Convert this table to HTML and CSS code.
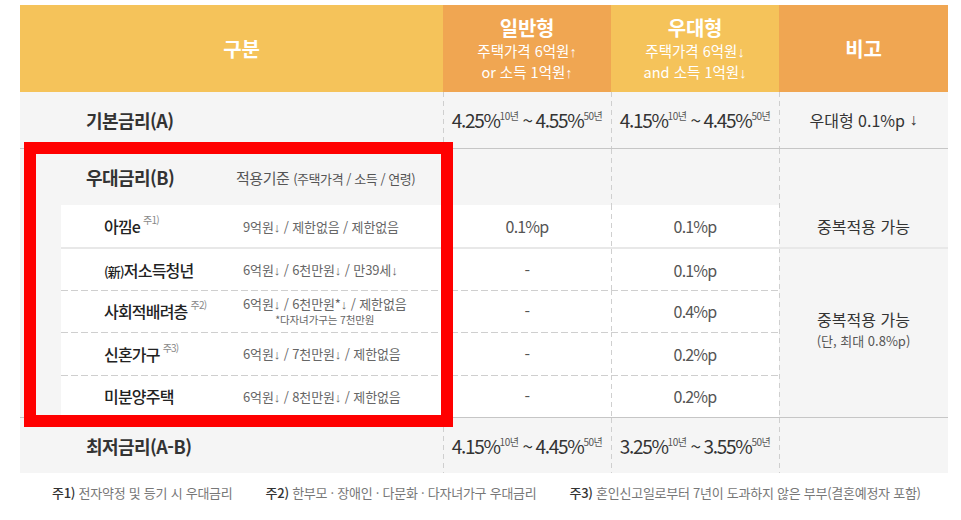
FILE: index.html
```html
<!DOCTYPE html>
<html lang="ko">
<head>
<meta charset="utf-8">
<title>금리 안내</title>
<link rel="stylesheet" href="styles.css">
</head>
<body>
<div class="page">
  <div class="table">
    <div class="thead">
      <div class="th th-yellow th-main"><span class="th-title">구분</span></div>
      <div class="th th-orange">
        <span class="th-title">일반형</span>
        <span class="th-sub">주택가격 6억원<span class="ar">↑</span></span>
        <span class="th-sub">or 소득 1억원<span class="ar">↑</span></span>
      </div>
      <div class="th th-yellow">
        <span class="th-title">우대형</span>
        <span class="th-sub">주택가격 6억원<span class="ar">↓</span></span>
        <span class="th-sub">and 소득 1억원<span class="ar">↓</span></span>
      </div>
      <div class="th th-orange"><span class="th-title">비고</span></div>
    </div>

    <div class="row row-basic">
      <div class="cell"><span class="label-main">기본금리(A)</span></div>
      <div class="cell center vd"><span class="rate">4.25%<span class="yr">10년</span> ~ 4.55%<span class="yr">50년</span></span></div>
      <div class="cell center vd"><span class="rate">4.15%<span class="yr">10년</span> ~ 4.45%<span class="yr">50년</span></span></div>
      <div class="cell center vd side-text">우대형 0.1%p&nbsp;<span class="ar">↓</span></div>
    </div>

    <div class="pref">
      <div class="pref-main">
        <div class="pref-head">
          <div class="cell"><span class="label-main">우대금리(B)</span><span class="crit-head">적용기준 <small>(주택가격 / 소득 / 연령)</small></span></div>
          <div class="cell vd"></div>
          <div class="cell vd"></div>
        </div>

        <div class="sub sub-first">
          <div class="cell"><span class="sub-label">아낌e<span class="fn">주1)</span></span><span class="crit">9억원<span class="ar">↓</span> / 제한없음 / 제한없음</span></div>
          <div class="cell center vd val">0.1%p</div>
          <div class="cell center vd val">0.1%p</div>
        </div>

        <div class="sub sub-2">
          <div class="cell"><span class="sub-label"><span class="new">(新)</span>저소득청년</span><span class="crit">6억원<span class="ar">↓</span> / 6천만원<span class="ar">↓</span> / 만39세<span class="ar">↓</span></span></div>
          <div class="cell center vd val">-</div>
          <div class="cell center vd val">0.1%p</div>
        </div>

        <div class="sub sub-3 dashed">
          <div class="cell"><span class="sub-label">사회적배려층<span class="fn">주2)</span></span><span class="crit crit-two"><span>6억원<span class="ar">↓</span> / 6천만원*<span class="ar">↓</span> / 제한없음</span><span class="crit-note">*다자녀가구는 7천만원</span></span></div>
          <div class="cell center vd val">-</div>
          <div class="cell center vd val">0.4%p</div>
        </div>

        <div class="sub sub-4 dashed">
          <div class="cell"><span class="sub-label">신혼가구<span class="fn">주3)</span></span><span class="crit">6억원<span class="ar">↓</span> / 7천만원<span class="ar">↓</span> / 제한없음</span></div>
          <div class="cell center vd val">-</div>
          <div class="cell center vd val">0.2%p</div>
        </div>

        <div class="sub sub-5 dashed">
          <div class="cell"><span class="sub-label">미분양주택</span><span class="crit">6억원<span class="ar">↓</span> / 8천만원<span class="ar">↓</span> / 제한없음</span></div>
          <div class="cell center vd val">-</div>
          <div class="cell center vd val">0.2%p</div>
        </div>
      </div>

      <div class="pref-side vd">
        <div class="side-head"></div>
        <div class="side-first side-text">중복적용 가능</div>
        <div class="side-merged side-text">
          <span>중복적용 가능</span>
          <span class="side-small">(단, 최대 0.8%p)</span>
        </div>
      </div>
    </div>

    <div class="row row-min">
      <div class="cell"><span class="label-main">최저금리(A-B)</span></div>
      <div class="cell center vd"><span class="rate">4.15%<span class="yr">10년</span> ~ 4.45%<span class="yr">50년</span></span></div>
      <div class="cell center vd"><span class="rate">3.25%<span class="yr">10년</span> ~ 3.55%<span class="yr">50년</span></span></div>
      <div class="cell vd"></div>
    </div>

    <div class="highlight"></div>
  </div>

  <div class="notes">
    <p><b>주1)</b> 전자약정 및 등기 시 우대금리</p>
    <p><b>주2)</b> 한부모 · 장애인 · 다문화 · 다자녀가구 우대금리</p>
    <p><b>주3)</b> 혼인신고일로부터 7년이 도과하지 않은 부부(결혼예정자 포함)</p>
  </div>
</div>
</body>
</html>
```

FILE: styles.css
```css
* {
  box-sizing: border-box;
  margin: 0;
  padding: 0;
}

body {
  font-family: "Noto Sans CJK KR", "Noto Sans", sans-serif;
  color: #333;
  background: #fff;
  letter-spacing: -0.05em;
}

.ar {
  font-family: "Liberation Sans", sans-serif;
  letter-spacing: 0;
}

.page {
  padding: 5px 0 0 20px;
}

.table {
  position: relative;
  width: 928px;
  background: #f5f5f5;
}

/* header */
.thead {
  display: grid;
  grid-template-columns: 423px 168px 168px 169px;
  height: 87px;
  color: #fff;
}

.th {
  display: flex;
  flex-direction: column;
  align-items: center;
  justify-content: center;
}

.th-yellow { background: #f5c35a; }
.th-orange { background: #f0a652; }
.th-main { padding-left: 20px; }

.th-title {
  font-size: 20px;
  font-weight: 700;
  line-height: 26px;
  letter-spacing: -0.01em;
}

.th-sub {
  font-size: 14.5px;
  line-height: 20px;
  letter-spacing: 0;
}

/* rows */
.row {
  display: grid;
  grid-template-columns: 423px 168px 168px 169px;
}

.row-basic {
  height: 57px;
  border-bottom: 1px solid #c6c6c6;
}

.row-min {
  height: 56px;
  border-top: 1px solid #c6c6c6;
}

.cell {
  display: flex;
  align-items: center;
  height: 100%;
}

.center { justify-content: center; }

.vd {
  background-image: linear-gradient(#cfcfcf 60%, transparent 60%);
  background-size: 1px 9px;
  background-repeat: repeat-y;
  background-position: 0 0;
}

.label-main {
  display: inline-block;
  width: 216px;
  padding-left: 66px;
  font-size: 18px;
  font-weight: 700;
  color: #333;
  letter-spacing: -0.03em;
}

.rate {
  font-size: 19px;
  line-height: 22px;
  color: #333;
  letter-spacing: -0.07em;
  white-space: nowrap;
}

.yr {
  font-size: 10px;
  line-height: 10px;
  vertical-align: top;
  position: relative;
  top: 2px;
  color: #555;
  letter-spacing: -0.05em;
}

.side-text {
  font-size: 16px;
  color: #333;
  letter-spacing: 0;
}

/* preferential section */
.pref {
  display: flex;
}

.pref-main {
  width: 759px;
}

.pref-head {
  display: grid;
  grid-template-columns: 423px 168px 168px;
  height: 56px;
}

.crit-head {
  font-size: 15px;
  color: #555;
  letter-spacing: -0.03em;
}

.crit-head small {
  font-size: 13px;
}

.sub {
  display: grid;
  grid-template-columns: 382px 168px 168px;
  margin-left: 41px;
  background-color: #fff;
}

.sub-first {
  height: 44px;
  border-bottom: 2px solid #e8e8e8;
}

.sub-2 { height: 41px; }
.sub-3 { height: 42px; }
.sub-4 { height: 43px; }
.sub-5 { height: 42px; }

.dashed {
  background-image: linear-gradient(to right, #cfcfcf 70%, transparent 70%);
  background-size: 10px 1px;
  background-repeat: repeat-x;
  background-position: 0 0;
}

.sub-label {
  display: inline-block;
  width: 182px;
  padding-left: 43px;
  font-size: 16px;
  font-weight: 500;
  color: #222;
  white-space: nowrap;
}

.new {
  font-size: 13px;
}

.fn {
  font-size: 10px;
  font-weight: 400;
  color: #888;
  vertical-align: top;
  position: relative;
  top: -2px;
  margin-left: 3px;
}

.crit {
  font-size: 13px;
  color: #666;
  white-space: nowrap;
  letter-spacing: -0.01em;
}

.crit-two {
  display: inline-flex;
  flex-direction: column;
  align-items: center;
  line-height: 17px;
}

.crit-note {
  font-size: 10.5px;
  line-height: 14px;
}

.val {
  font-size: 16px;
  color: #555;
}

.pref-side {
  width: 169px;
  display: flex;
  flex-direction: column;
}

.side-head {
  height: 56px;
}

.side-first {
  height: 44px;
  border-bottom: 2px solid #e8e8e8;
  display: flex;
  align-items: center;
  justify-content: center;
}

.side-merged {
  flex: 1;
  display: flex;
  flex-direction: column;
  align-items: center;
  justify-content: center;
  line-height: 22px;
  padding-bottom: 6px;
}

.side-small {
  font-size: 13px;
  color: #555;
}

/* red highlight overlay */
.highlight {
  position: absolute;
  left: 4px;
  top: 137px;
  width: 429px;
  height: 285px;
  border: 12px solid #ff0000;
  pointer-events: none;
}

/* notes */
.notes {
  display: flex;
  gap: 33px;
  padding-left: 32px;
  margin-top: 11px;
  font-size: 13px;
  line-height: 18px;
  color: #777;
  letter-spacing: -0.02em;
}

.notes b {
  font-weight: 500;
  color: #333;
}
```
